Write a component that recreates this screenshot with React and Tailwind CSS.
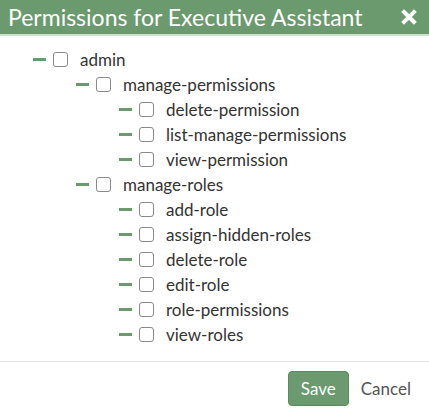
import React from "react";

const tree = [
  {
    name: "admin",
    children: [
      {
        name: "manage-permissions",
        children: [
          { name: "delete-permission" },
          { name: "list-manage-permissions" },
          { name: "view-permission" },
        ],
      },
      {
        name: "manage-roles",
        children: [
          { name: "add-role" },
          { name: "assign-hidden-roles" },
          { name: "delete-role" },
          { name: "edit-role" },
          { name: "role-permissions" },
          { name: "view-roles" },
        ],
      },
    ],
  },
];

function Node({ node }) {
  return (
    <div>
      <div className="flex items-center h-[25px]">
        <span className="w-[13px] h-[3px] bg-[#6a9a6d] mr-[7px]" />
        <span className="w-[15px] h-[15px] border border-[#8a8a8a] rounded-[3px] bg-white" />
        <span className="ml-[12px] text-[17px] text-[#333]">{node.name}</span>
      </div>
      {node.children && (
        <div className="pl-[43px]">
          {node.children.map((c) => (
            <Node key={c.name} node={c} />
          ))}
        </div>
      )}
    </div>
  );
}

export default function App() {
  return (
    <div
      className="w-[429px] h-[415px] bg-white flex flex-col"
      style={{ fontFamily: "Lato, 'Open Sans', sans-serif" }}
    >
      {/* HEADER */}
      <div className="h-[36px] bg-[#6a9a6d] border-b-2 border-[#cfe0cf] flex items-center justify-between pl-[8px] pr-[12px]">
        <h1 className="text-white text-[23px] leading-none">
          Permissions for Executive Assistant
        </h1>
        <svg width="16" height="16" viewBox="0 0 16 16">
          <path d="M3 3 L13 13 M13 3 L3 13" stroke="white" strokeWidth="4" strokeLinecap="square" />
        </svg>
      </div>

      {/* TREE */}
      <div className="flex-1 pl-[33px] pt-[11px]">
        {tree.map((n) => (
          <Node key={n.name} node={n} />
        ))}
      </div>

      {/* FOOTER */}
      <div className="border-t border-[#e5e5e5] h-[54px] flex items-center justify-end gap-[12px] pr-[18px]">
        <button className="h-[35px] px-[12px] bg-[#6a9a6d] border border-[#5a8a5d] rounded-[4px] text-white text-[17px]">
          Save
        </button>
        <span className="text-[#555] text-[17px]">Cancel</span>
      </div>
    </div>
  );
}
